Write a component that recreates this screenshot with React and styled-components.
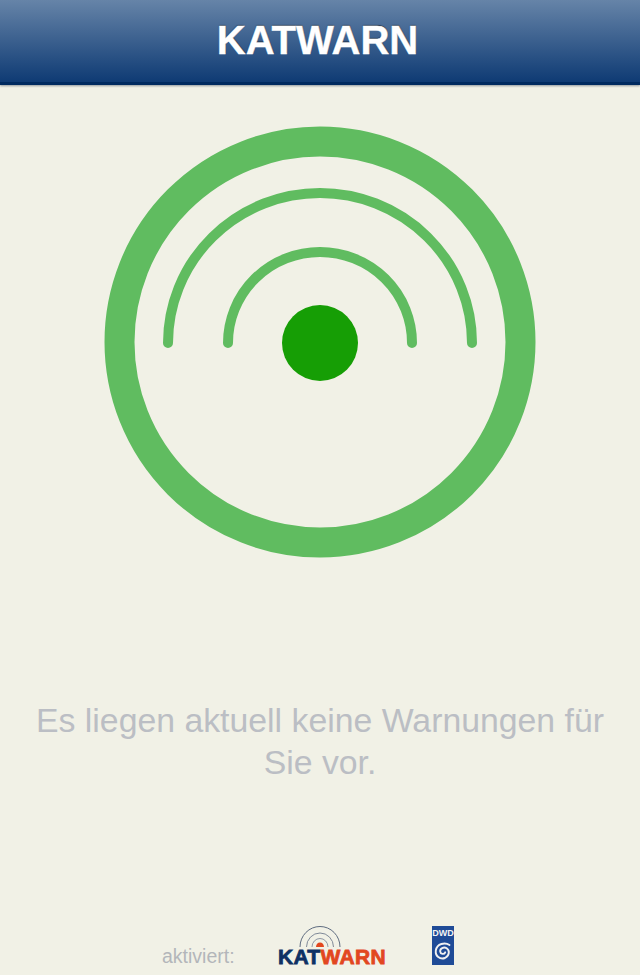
import styled, { createGlobalStyle } from "styled-components";

const GlobalStyle = createGlobalStyle`
  html, body {
    margin: 0;
    padding: 0;
    background: #f1f1e6;
  }
  * {
    box-sizing: border-box;
  }
`;

const App = () => (
  <Page>
    <GlobalStyle />
    <Header>
      <HeaderTitle>KATWARN</HeaderTitle>
    </Header>
    <Main>
      <Radar viewBox="0 0 640 480" aria-hidden="true">
        <circle cx="320" cy="242" r="200.5" fill="none" stroke="#60bc60" strokeWidth="30" />
        <path d="M168 243 A152 150 0 0 1 472 243" fill="none" stroke="#60bc60" strokeWidth="10" strokeLinecap="round" />
        <path d="M228 243 A92 91 0 0 1 412 243" fill="none" stroke="#60bc60" strokeWidth="10" strokeLinecap="round" />
        <circle cx="320" cy="243" r="38" fill="#169e05" />
      </Radar>
      <Message>Es liegen aktuell keine Warnungen für Sie vor.</Message>
    </Main>
    <Footer>
      <FooterLabel>aktiviert:</FooterLabel>
      <KatwarnLogo>
        <KatwarnWaves width="42" height="23" viewBox="0 0 42 23" aria-hidden="true">
          <path d="M1 22 A20 20.5 0 0 1 41 22" fill="none" stroke="#5f6c80" strokeWidth="1" />
          <path d="M7.5 22 A13.5 14 0 0 1 34.5 22" fill="none" stroke="#7f8998" strokeWidth="1" />
          <path d="M13 22 A8 8.5 0 0 1 29 22" fill="none" stroke="#8f98a5" strokeWidth="1" />
          <path d="M17 22 A4 4.5 0 0 1 25 22 Z" fill="#e2471f" />
        </KatwarnWaves>
        <KatwarnWord>
          KAT<KatwarnAccent>WARN</KatwarnAccent>
        </KatwarnWord>
      </KatwarnLogo>
      <DwdLogo>
        <DwdText>DWD</DwdText>
        <svg width="18" height="20" viewBox="0 0 18 20" aria-hidden="true">
          <path
            d="M15.5 4 C11 1 3 2.5 1.8 9.5 C1.1 15 6 19 11 17 C15.5 15 16 9.5 12.7 7.3 C9.8 5.5 5.8 7.5 6.2 10.6 C6.5 13.2 10.2 13.8 11.2 11.3"
            fill="none"
            stroke="#f1f1f1"
            strokeWidth="1.9"
            strokeLinecap="round"
          />
        </svg>
      </DwdLogo>
    </Footer>
  </Page>
);

const Page = styled.div`
  width: 640px;
  height: 975px;
  display: flex;
  flex-direction: column;
  overflow: hidden;
  background: #f1f1e6;
  font-family: "Liberation Sans", Arial, sans-serif;
`;

const Header = styled.header`
  height: 85px;
  flex: none;
  display: flex;
  align-items: flex-start;
  justify-content: center;
  padding: 17px 5px 0 0;
  background: linear-gradient(#6684a8 0%, #0f3b74 96%, #002a5f 97%, #002a5f 100%);
  box-shadow: 0 1px 2px rgba(0, 20, 50, 0.4);
`;

const HeaderTitle = styled.h1`
  margin: 0;
  color: #ffffff;
  font-size: 40px;
  line-height: 46px;
  font-weight: 700;
  text-shadow: 0 -1px 1px rgba(0, 0, 0, 0.55);
  -webkit-text-stroke: 0.4px #ffffff;
`;

const Main = styled.main`
  flex: 1;
  display: flex;
  flex-direction: column;
  align-items: center;
  padding-top: 15px;
`;

const Radar = styled.svg`
  width: 640px;
  height: 480px;
  flex: none;
`;

const Message = styled.p`
  width: 610px;
  margin: 119px 0 0;
  color: #bbbec4;
  font-size: 33.8px;
  line-height: 42px;
  text-align: center;
`;

const Footer = styled.footer`
  height: 52px;
  flex: none;
  display: flex;
  align-items: flex-end;
  padding: 0 0 10px 162px;
`;

const FooterLabel = styled.span`
  width: 116px;
  margin-bottom: -1px;
  color: #b3b6ba;
  font-size: 19.5px;
  line-height: 20px;
`;

const KatwarnLogo = styled.div`
  width: 108px;
  display: flex;
  flex-direction: column;
  align-items: flex-start;
`;

const KatwarnWaves = styled.svg`
  margin-left: 21px;
  flex: none;
`;

const KatwarnWord = styled.span`
  color: #0e3164;
  font-size: 21px;
  line-height: 17px;
  font-weight: 700;
  letter-spacing: 0.3px;
  white-space: nowrap;
  -webkit-text-stroke: 0.8px currentColor;
`;

const KatwarnAccent = styled.span`
  color: #e2471f;
`;

const DwdLogo = styled.div`
  width: 22px;
  height: 39px;
  margin-left: 46px;
  display: flex;
  flex-direction: column;
  align-items: center;
  gap: 3px;
  padding-top: 2px;
  background: #1f4b97;
`;

const DwdText = styled.span`
  color: #f4f4f4;
  font-size: 9px;
  line-height: 10px;
  font-weight: 700;
`;

export default App;
